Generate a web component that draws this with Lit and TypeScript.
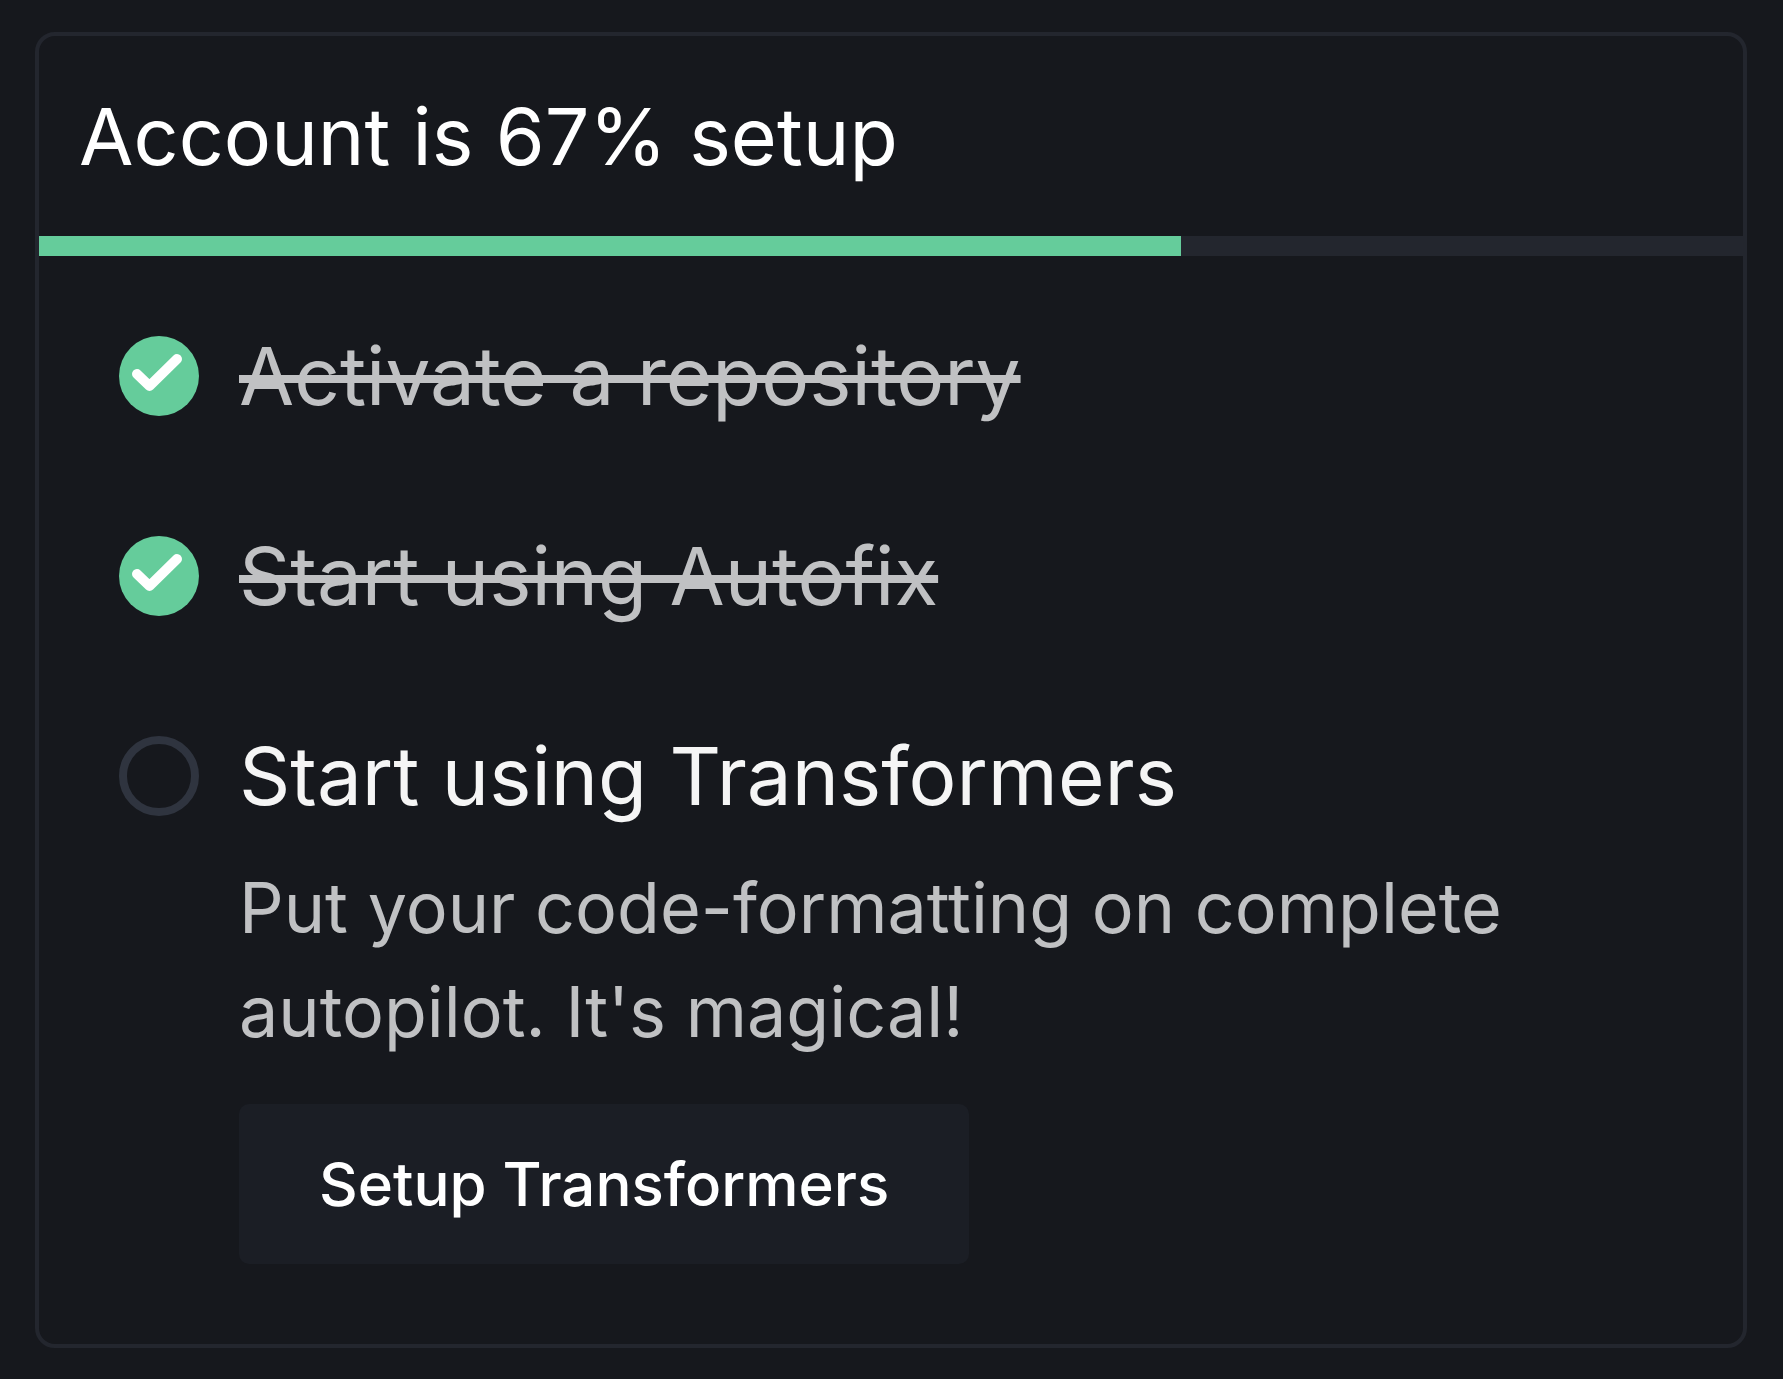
import { LitElement, html, css, svg } from "lit";
import { customElement, state } from "lit/decorators.js";

interface Step {
  title: string;
  done: boolean;
  description?: string;
  action?: string;
}

@customElement("app-root")
export class AppRoot extends LitElement {
  static styles = css`
    :host {
      display: block;
      box-sizing: border-box;
      min-height: 100vh;
      padding: 32px 36px 31px 35px;
      background: #16181d;
      color: #ffffff;
      font-family: Inter, "Liberation Sans", sans-serif;
    }
    .card {
      border: 4px solid #23262e;
      border-radius: 20px;
      overflow: hidden;
    }
    .title {
      margin: 0;
      padding: 40px;
      font-size: 79px;
      line-height: 120px;
      font-weight: 400;
    }
    .track {
      height: 20px;
      background: #23262e;
    }
    .fill {
      height: 100%;
      background: #65cc9b;
    }
    .steps {
      list-style: none;
      margin: 0;
      padding: 80px;
      display: flex;
      flex-direction: column;
      gap: 120px;
    }
    .step {
      display: flex;
      align-items: flex-start;
      gap: 40px;
    }
    .mark {
      flex: none;
      width: 80px;
      height: 80px;
    }
    .body {
      flex: 1;
      min-width: 0;
    }
    .name {
      margin: 0;
      color: #f5f5f5;
      font-size: 80px;
      line-height: 80px;
      font-weight: 400;
    }
    .done {
      color: #c0c1c3;
      text-decoration: line-through 8px;
    }
    .description {
      margin: 40px 0;
      color: #c0c1c3;
      font-size: 70px;
      line-height: 104px;
    }
    .action {
      display: block;
      border: 0;
      border-radius: 10px;
      padding: 40px 80px;
      background: #1b1e25;
      color: #ffffff;
      font-family: inherit;
      font-size: 60px;
      line-height: 80px;
      font-weight: 500;
      cursor: pointer;
    }
  `;

  @state() private percent = 67;

  @state() private steps: Step[] = [
    { title: "Activate a repository", done: true },
    { title: "Start using Autofix", done: true },
    {
      title: "Start using Transformers",
      done: false,
      description: "Put your code-formatting on complete autopilot. It's magical!",
      action: "Setup Transformers",
    },
  ];

  private renderMark(done: boolean) {
    return html`<svg class="mark" viewBox="0 0 80 80" aria-hidden="true">
      ${done
        ? svg`<circle cx="40" cy="40" r="40" fill="#65cc9b"/>
            <path d="M18 38 L30.5 50 L58 23" fill="none" stroke="#fff" stroke-width="10" stroke-linecap="round" stroke-linejoin="round"/>`
        : svg`<circle cx="40" cy="40" r="36" fill="none" stroke="#2f343f" stroke-width="8"/>`}
    </svg>`;
  }

  render() {
    return html`<section class="card" aria-labelledby="title">
      <h1 class="title" id="title">Account is ${this.percent}% setup</h1>
      <div class="track" role="progressbar" aria-labelledby="title" aria-valuenow=${this.percent}>
        <div class="fill" style="width: ${this.percent}%"></div>
      </div>
      <ul class="steps">
        ${this.steps.map(
          (step) => html`<li class="step">
            ${this.renderMark(step.done)}
            <div class="body">
              <h2 class="name ${step.done ? "done" : ""}">${step.title}</h2>
              ${step.description ? html`<p class="description">${step.description}</p>` : ""}
              ${step.action ? html`<button class="action" type="button">${step.action}</button>` : ""}
            </div>
          </li>`
        )}
      </ul>
    </section>`;
  }
}
